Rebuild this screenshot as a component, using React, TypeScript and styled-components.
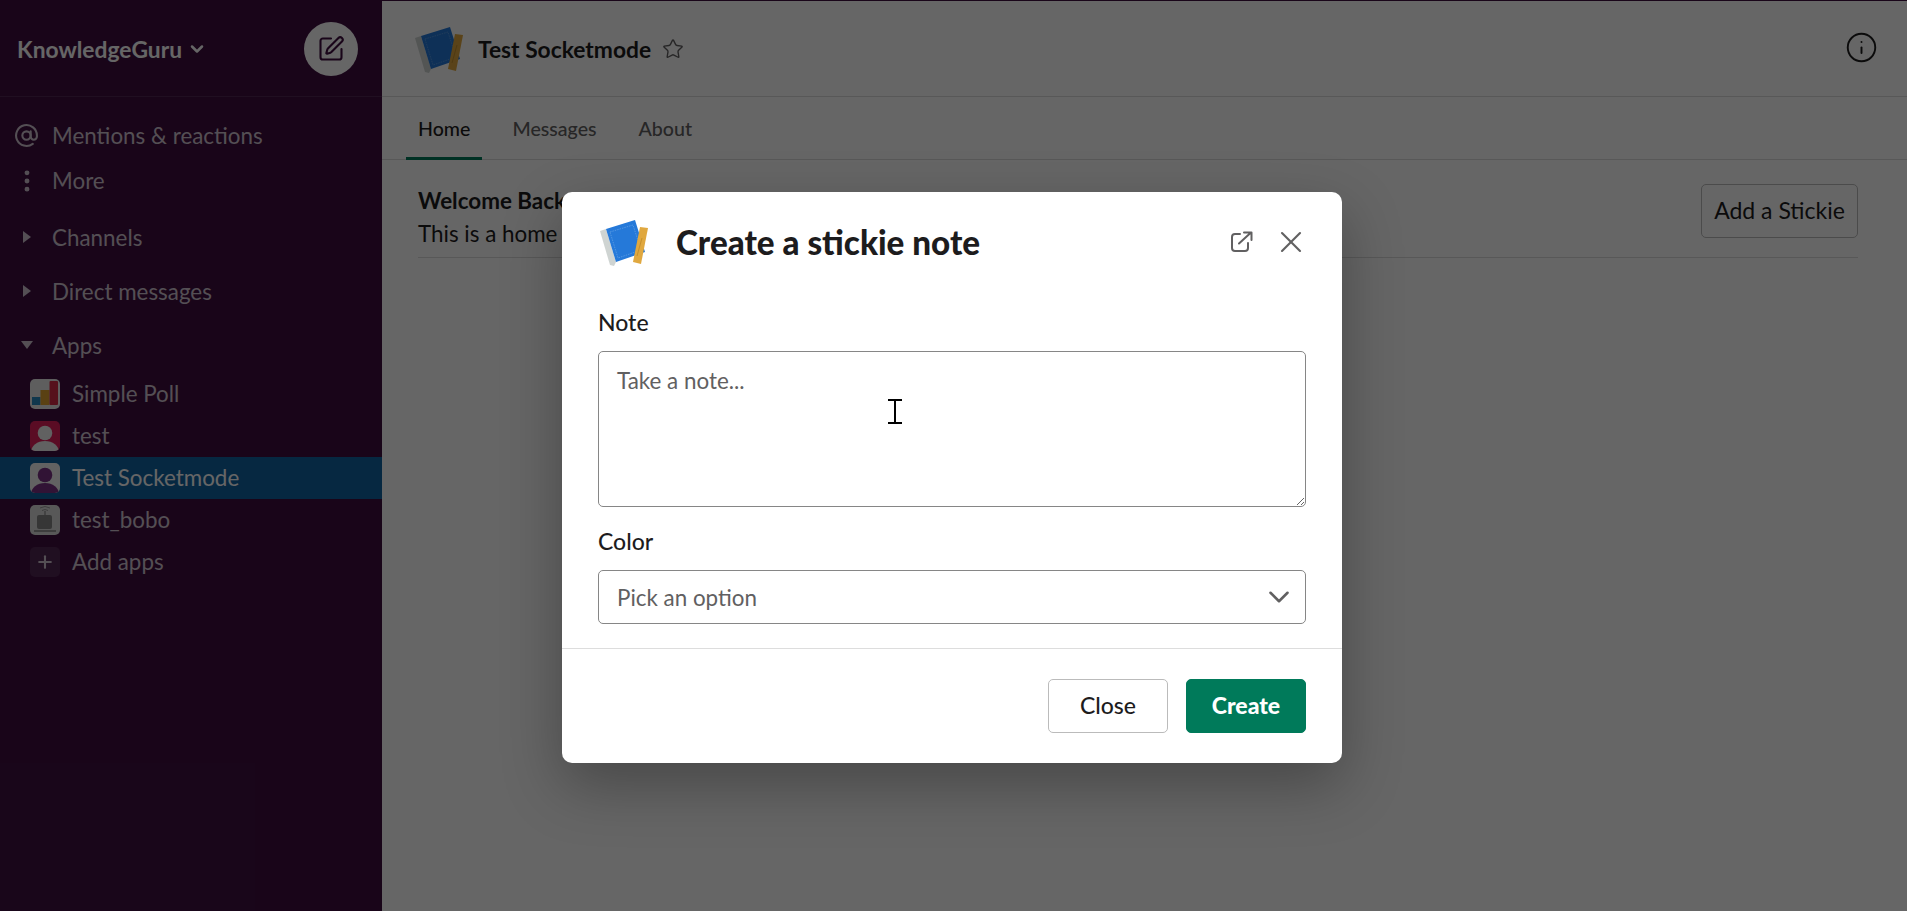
import React from "react";
import styled, { createGlobalStyle } from "styled-components";
import { AtSign, ChevronDown, EllipsisVertical, Info, Plus, SquarePen, Star, X } from "lucide-react";

const GlobalStyle = createGlobalStyle`
  html, body {
    margin: 0;
    height: 100%;
    overflow: hidden;
    font-family: Lato, "Liberation Sans", sans-serif;
  }
  * { box-sizing: border-box; }
`;

const Page = styled.div`
  position: relative;
  height: 911px;
  display: flex;
  flex-direction: column;
  background: #fff;
`;

const TopLine = styled.div`
  height: 1px;
  background: #3f0e40;
`;

const Workspace = styled.div`
  flex: 1;
  display: flex;
  min-height: 0;
`;

const Sidebar = styled.aside`
  width: 382px;
  flex-shrink: 0;
  background: #3f0e40;
  color: #d1c5d2;
`;

const SidebarHeader = styled.div`
  height: 96px;
  display: flex;
  align-items: center;
  justify-content: space-between;
  padding: 0 24px 0 17px;
  border-bottom: 1px solid #522653;
`;

const WorkspaceName = styled.div`
  display: flex;
  align-items: center;
  gap: 5px;
  color: #fff;
  font-size: 22.8px;
  font-weight: 700;
`;

const ComposeButton = styled.div`
  width: 54px;
  height: 54px;
  border-radius: 50%;
  background: #fff;
  color: #3f0e40;
  display: flex;
  align-items: center;
  justify-content: center;
`;

const Nav = styled.nav`
  padding-top: 17px;
`;

const NavRow = styled.div<{ $height: number; $gap?: number; $active?: boolean }>`
  height: ${(p) => p.$height}px;
  margin-top: ${(p) => p.$gap ?? 0}px;
  padding-bottom: 2px;
  display: flex;
  align-items: center;
  font-size: 22.4px;
  background: ${(p) => (p.$active ? "#1164a3" : "transparent")};
  color: ${(p) => (p.$active ? "#fff" : "#d1c5d2")};
`;

const NavIcon = styled.span`
  width: 53px;
  margin-right: -1px;
  display: flex;
  justify-content: center;
  flex-shrink: 0;
`;

const Caret = styled.span<{ $open?: boolean }>`
  width: 0;
  height: 0;
  margin-left: ${(p) => (p.$open ? 21 : 23)}px;
  margin-right: ${(p) => (p.$open ? 19 : 21)}px;
  ${(p) =>
    p.$open
      ? `border-left: 6.5px solid transparent; border-right: 6.5px solid transparent; border-top: 8px solid #d1c5d2;`
      : `border-top: 6.5px solid transparent; border-bottom: 6.5px solid transparent; border-left: 8px solid #d1c5d2;`}
`;

const AppRow = styled(NavRow)`
  padding-left: 30px;
  gap: 12px;
`;

const AppIcon = styled.span<{ $bg: string }>`
  width: 30px;
  height: 30px;
  margin-top: 2px;
  border-radius: 5px;
  overflow: hidden;
  background: ${(p) => p.$bg};
  flex-shrink: 0;
  display: flex;
  align-items: center;
  justify-content: center;
  color: #d1c5d2;
`;

const Main = styled.main`
  flex: 1;
  min-width: 0;
  color: #1d1c1d;
`;

const ChannelHeader = styled.header`
  height: 96px;
  display: flex;
  align-items: center;
  padding: 0 29px 0 33px;
  border-bottom: 1px solid #ddd;
`;

const ChannelTitle = styled.h1`
  margin: 0 11px 0 13px;
  font-size: 22.8px;
  font-weight: 700;
`;

const InfoButton = styled.span`
  margin-left: auto;
  margin-bottom: 3px;
  display: flex;
`;

const Tabs = styled.div`
  height: 63px;
  display: flex;
  padding-left: 24px;
  gap: 18px;
  border-bottom: 1px solid #ddd;
`;

const Tab = styled.div<{ $active?: boolean }>`
  padding: 2px 12px 0;
  display: flex;
  align-items: center;
  font-size: 19.6px;
  font-weight: 500;
  margin-bottom: -1px;
  color: ${(p) => (p.$active ? "#1d1c1d" : "#616061")};
  border-bottom: 3px solid ${(p) => (p.$active ? "#007a5a" : "transparent")};
`;

const HomeSection = styled.section`
  margin: 24px 49px 0 36px;
  height: 74px;
  display: flex;
  justify-content: space-between;
  border-bottom: 1px solid #ddd;
`;

const Greeting = styled.div`
  font-size: 22.4px;
  line-height: 33px;
`;

const GreetingTitle = styled.div`
  font-weight: 700;
`;

const StickieButton = styled.button`
  width: 157px;
  height: 54px;
  background: #fff;
  border: 1px solid #bbb;
  border-radius: 5px;
  font: 400 23px Lato, sans-serif;
  color: #1d1c1d;
  padding: 0 0 2px;
`;

const Overlay = styled.div`
  position: absolute;
  inset: 0;
  background: rgba(0, 0, 0, 0.6);
  display: flex;
  justify-content: center;
  padding: 192px 3px 0 0;
`;

const Modal = styled.div`
  width: 780px;
  height: 571px;
  background: #fff;
  border-radius: 10px;
  box-shadow: 0 22px 60px rgba(0, 0, 0, 0.3);
  color: #1d1c1d;
  display: flex;
  flex-direction: column;
`;

const ModalHeader = styled.div`
  height: 100px;
  display: flex;
  align-items: center;
  padding: 0 33px 0 38px;
`;

const ModalTitle = styled.h2`
  margin: 0 0 0 26px;
  font-size: 33.2px;
  font-weight: 900;
`;

const ModalActions = styled.div`
  margin-left: auto;
  display: flex;
  align-items: center;
  gap: 20px;
  color: #616061;
`;

const ModalBody = styled.div`
  flex: 1;
  padding: 14px 36px 0;
`;

const FieldLabel = styled.label`
  display: block;
  height: 45px;
  font-size: 23px;
  font-weight: 500;
  line-height: 33px;
`;

const NoteInput = styled.textarea`
  display: block;
  width: 100%;
  height: 156px;
  margin-bottom: 18px;
  padding: 15px 18px;
  border: 1px solid #868686;
  border-radius: 5px;
  font: 400 22.4px/28px Lato, sans-serif;
  color: #1d1c1d;
  outline: none;
  &::placeholder { color: #616061; opacity: 1; }
`;

const SelectBox = styled.div`
  height: 54px;
  display: flex;
  align-items: center;
  justify-content: space-between;
  padding: 0 9px 0 18px;
  border: 1px solid #868686;
  border-radius: 5px;
  font-size: 22.4px;
  color: #616061;
`;

const ModalFooter = styled.div`
  height: 115px;
  display: flex;
  justify-content: flex-end;
  align-items: flex-start;
  gap: 18px;
  padding: 30px 36px 0;
  border-top: 1px solid #ddd;
`;

const FooterButton = styled.button<{ $primary?: boolean }>`
  width: 120px;
  height: 54px;
  padding: 0 0 2px;
  border-radius: 5px;
  border: 1px solid ${(p) => (p.$primary ? "#007a5a" : "#bbb")};
  background: ${(p) => (p.$primary ? "#007a5a" : "#fff")};
  color: ${(p) => (p.$primary ? "#fff" : "#1d1c1d")};
  font: ${(p) => (p.$primary ? 900 : 500)} 23px Lato, sans-serif;
`;

const TextCursor = styled.svg`
  position: absolute;
  left: 888px;
  top: 399px;
`;

const LogoSvg = styled.svg`
  flex-shrink: 0;
  margin-top: 4px;
`;

const BookLogo = () => (
  <LogoSvg width="50" height="48" viewBox="0 0 50 48">
    <path d="M0 11 L6 9 L16 42 L14 46 L10 45 Z" fill="#cfd4d2" />
    <path d="M6 9 L35 0 L45 32 L16 42 Z" fill="#2579d9" />
    <path d="M10 12 L33 5 L41 30 L18 38 Z" fill="none" stroke="#71aae8" strokeWidth="0.6" strokeDasharray="1.5 1" />
    <path d="M40 7 L48 8 L41 44 L33 42 Z" fill="#e0a83f" />
    <path d="M42 18 L37 36" stroke="#b98526" strokeWidth="0.7" />
  </LogoSvg>
);

const OpenExternalIcon = () => (
  <svg width="22" height="22" viewBox="0 0 22 22" fill="none" stroke="currentColor" strokeWidth="2" strokeLinecap="round" strokeLinejoin="round">
    <path d="M9 3 H4 a3 3 0 0 0 -3 3 V17 a3 3 0 0 0 3 3 H14 a3 3 0 0 0 3 -3 V12" />
    <path d="M8 12.500 L20 1.500 M13 1.500 H20.500 V9" />
  </svg>
);

const PersonAvatar: React.FC<{ color: string }> = ({ color }) => (
  <svg width="30" height="30" viewBox="0 0 30 30">
    <circle cx="15" cy="12" r="7.3" fill={color} />
    <ellipse cx="15" cy="31" rx="14" ry="11" fill={color} />
  </svg>
);

const PollIcon = () => (
  <svg width="30" height="30" viewBox="0 0 30 30">
    <rect x="2" y="18" width="8.500" height="8" fill="#2a8ac0" />
    <rect x="10.500" y="11" width="9" height="15" fill="#e2a231" />
    <rect x="19.500" y="2" width="8.500" height="24" rx="1" fill="#d82c48" />
  </svg>
);

const BotIcon = () => (
  <svg width="30" height="30" viewBox="0 0 30 30">
    <path d="M10 3 q5 -3 10 0 M12 5.500 q3 -2 6 0" stroke="#999" strokeWidth="1" fill="none" />
    <path d="M15 6 V10" stroke="#999" strokeWidth="1.500" />
    <rect x="7" y="10" width="15" height="14" rx="2" fill="#888" />
    <rect x="4" y="25" width="22" height="2" fill="#999" />
  </svg>
);

const App: React.FC = () => {
  return (
    <Page>
      <GlobalStyle />
      <TopLine />
      <Workspace>
        <Sidebar>
          <SidebarHeader>
            <WorkspaceName>
              KnowledgeGuru
              <ChevronDown size={20} strokeWidth={3} />
            </WorkspaceName>
            <ComposeButton>
              <SquarePen size={28} strokeWidth={1.8} />
            </ComposeButton>
          </SidebarHeader>
          <Nav>
            <NavRow $height={45}>
              <NavIcon><AtSign size={25} strokeWidth={2} /></NavIcon>
              Mentions &amp; reactions
            </NavRow>
            <NavRow $height={45}>
              <NavIcon><EllipsisVertical size={28} strokeWidth={2.2} /></NavIcon>
              More
            </NavRow>
            <NavRow $height={54} $gap={7}>
              <Caret />
              Channels
            </NavRow>
            <NavRow $height={54}>
              <Caret />
              Direct messages
            </NavRow>
            <NavRow $height={54}>
              <Caret $open />
              Apps
            </NavRow>
            <AppRow $height={42}>
              <AppIcon $bg="#ececec"><PollIcon /></AppIcon>
              Simple Poll
            </AppRow>
            <AppRow $height={42}>
              <AppIcon $bg="#e01e5a"><PersonAvatar color="#f2f2f2" /></AppIcon>
              test
            </AppRow>
            <AppRow $height={42} $active>
              <AppIcon $bg="#f4f4f4"><PersonAvatar color="#7c3085" /></AppIcon>
              Test Socketmode
            </AppRow>
            <AppRow $height={42}>
              <AppIcon $bg="#dcdcdc"><BotIcon /></AppIcon>
              test_bobo
            </AppRow>
            <AppRow $height={42}>
              <AppIcon $bg="#522653"><Plus size={20} strokeWidth={2.5} /></AppIcon>
              Add apps
            </AppRow>
          </Nav>
        </Sidebar>
        <Main>
          <ChannelHeader>
            <BookLogo />
            <ChannelTitle>Test Socketmode</ChannelTitle>
            <Star size={22} strokeWidth={1.5} color="#616061" />
            <InfoButton><Info size={33} strokeWidth={1.4} color="#1d1c1d" /></InfoButton>
          </ChannelHeader>
          <Tabs>
            <Tab $active>Home</Tab>
            <Tab>Messages</Tab>
            <Tab>About</Tab>
          </Tabs>
          <HomeSection>
            <Greeting>
              <GreetingTitle>Welcome Back</GreetingTitle>
              This is a home
            </Greeting>
            <StickieButton>Add a Stickie</StickieButton>
          </HomeSection>
        </Main>
      </Workspace>
      <Overlay>
        <Modal>
          <ModalHeader>
            <BookLogo />
            <ModalTitle>Create a stickie note</ModalTitle>
            <ModalActions>
              <OpenExternalIcon />
              <X size={36} strokeWidth={1.4} />
            </ModalActions>
          </ModalHeader>
          <ModalBody>
            <FieldLabel>Note</FieldLabel>
            <NoteInput placeholder="Take a note..." />
            <FieldLabel>Color</FieldLabel>
            <SelectBox>
              Pick an option
              <ChevronDown size={34} strokeWidth={1.8} />
            </SelectBox>
          </ModalBody>
          <ModalFooter>
            <FooterButton>Close</FooterButton>
            <FooterButton $primary>Create</FooterButton>
          </ModalFooter>
        </Modal>
      </Overlay>
      <TextCursor width="14" height="25" viewBox="0 0 14 25">
        <path d="M0 1 H14 M7 1 V24 M0 24 H14" stroke="#000" strokeWidth="2" fill="none" />
      </TextCursor>
    </Page>
  );
};

export default App;
